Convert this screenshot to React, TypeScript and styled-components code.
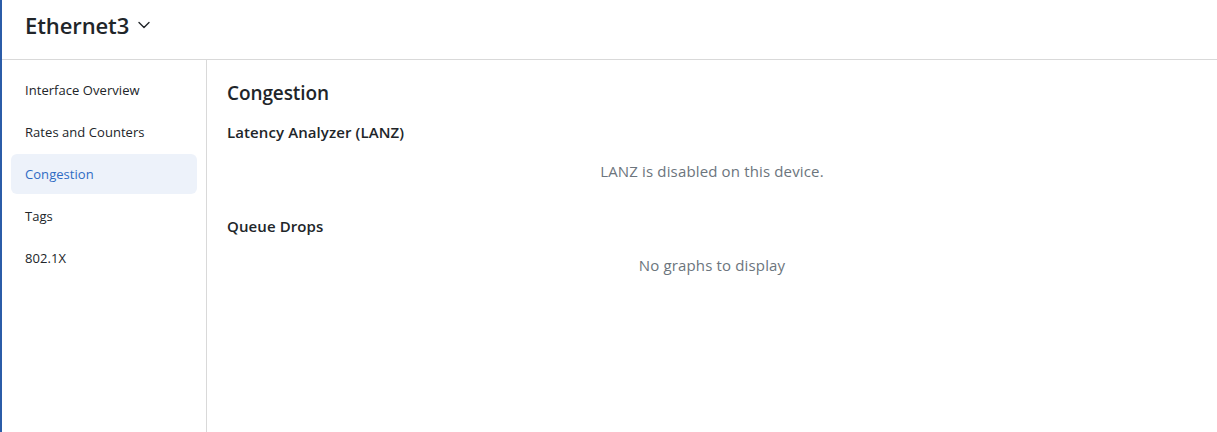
import React from "react";
import styled, { createGlobalStyle } from "styled-components";

const Global = createGlobalStyle`
  html, body { margin: 0; padding: 0; background: #fff; }
  body { font-family: "Open Sans", "Noto Sans", sans-serif; color: #212529; }
  * { box-sizing: border-box; }
`;

const Page = styled.div`
  width: 1217px;
  height: 432px;
  border-left: 2px solid #2b5ca8;
  display: flex;
  flex-direction: column;
  overflow: hidden;
`;

const Header = styled.header`
  height: 60px;
  flex: none;
  border-bottom: 1px solid #d9d9d9;
  display: flex;
  align-items: center;
  padding: 0 0 10px 23px;
`;

const Title = styled.h1`
  margin: 0;
  font-size: 22px;
  font-weight: 600;
  letter-spacing: -0.1px;
  color: #212529;
  display: flex;
  align-items: center;
  gap: 9px;
`;

const Body = styled.div`
  flex: 1;
  display: flex;
  min-height: 0;
`;

const Sidebar = styled.nav`
  width: 205px;
  flex: none;
  border-right: 1px solid #d9d9d9;
  padding: 10px 9px 0 9px;
  display: flex;
  flex-direction: column;
  gap: 2px;
`;

const NavItem = styled.div<{ $active?: boolean }>`
  height: 40px;
  display: flex;
  align-items: center;
  padding-left: 14px;
  border-radius: 6px;
  font-size: 13px;
  letter-spacing: 0.05px;
  color: ${(p) => (p.$active ? "#2f6bc4" : "#212529")};
  background: ${(p) => (p.$active ? "#edf2fa" : "transparent")};
`;

const Main = styled.main`
  flex: 1;
  padding: 20px 20px;
  display: flex;
  flex-direction: column;
`;

const SectionTitle = styled.h2`
  margin: 0;
  font-size: 19px;
  font-weight: 600;
  letter-spacing: -0.1px;
  line-height: 26px;
`;

const SubTitle = styled.h3<{ $top: number }>`
  margin: 0;
  font-size: 15px;
  font-weight: 600;
  letter-spacing: 0.1px;
  line-height: 22px;
  margin-top: ${(p) => p.$top}px;
`;

const Empty = styled.div`
  text-align: center;
  font-size: 15px;
  color: #6c757d;
  letter-spacing: 0.15px;
  line-height: 22px;
  margin-top: 17px;
`;

const Chevron = () => (
  <svg width="12" height="8" viewBox="0 0 12 8" fill="none">
    <path d="M1 1.5 L6 6.5 L11 1.5" stroke="#212529" strokeWidth="1.4" strokeLinecap="round" strokeLinejoin="round" />
  </svg>
);

const items = ["Interface Overview", "Rates and Counters", "Congestion", "Tags", "802.1X"];

export default function App() {
  return (
    <>
      <Global />
      <Page>
        <Header>
          <Title>
            Ethernet3
            <Chevron />
          </Title>
        </Header>
        <Body>
          <Sidebar>
            {items.map((it) => (
              <NavItem key={it} $active={it === "Congestion"}>
                {it}
              </NavItem>
            ))}
          </Sidebar>
          <Main>
            <SectionTitle>Congestion</SectionTitle>
            <SubTitle $top={15}>Latency Analyzer (LANZ)</SubTitle>
            <Empty>LANZ is disabled on this device.</Empty>
            <SubTitle $top={33}>Queue Drops</SubTitle>
            <Empty>No graphs to display</Empty>
          </Main>
        </Body>
      </Page>
    </>
  );
}
